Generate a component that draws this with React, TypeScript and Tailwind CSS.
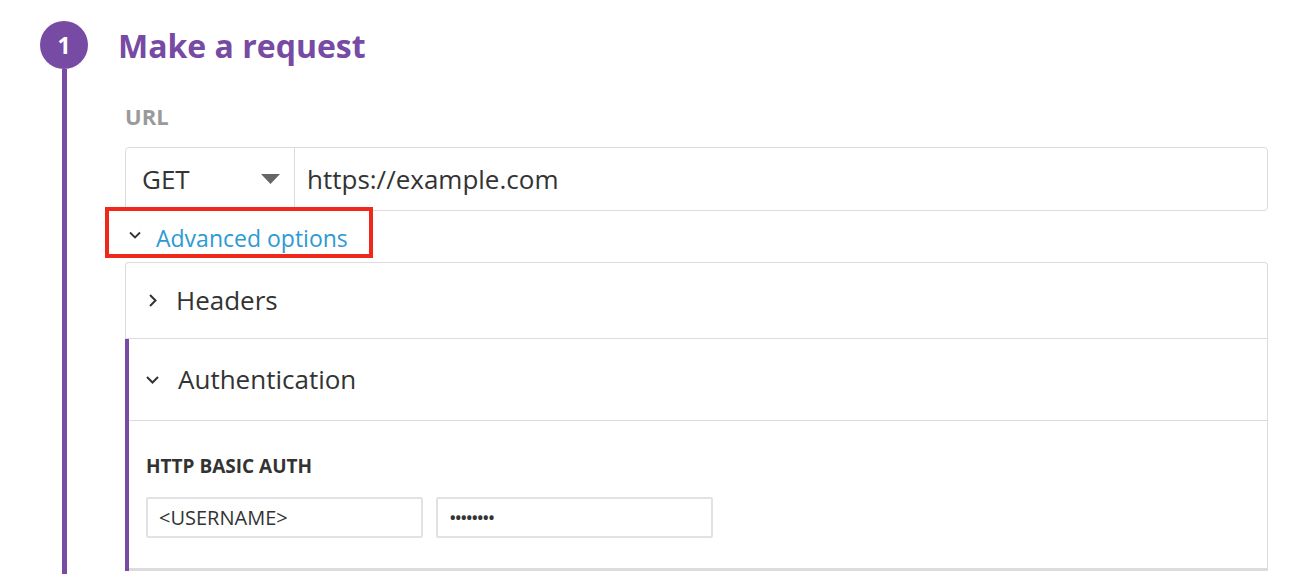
export default function App() {
  return (
    <div className="relative flex h-[574px] w-[1294px] overflow-hidden bg-white font-['Open_Sans',sans-serif]">
      {/* Step rail */}
      <div className="flex w-[88px] shrink-0 flex-col items-center pl-[40px]">
        <div className="mt-[21px] flex h-[48px] w-[48px] items-center justify-center rounded-full bg-[#774aa4] text-[23px] font-bold text-white">
          1
        </div>
        <div className="w-[5px] flex-1 bg-[#774aa4]" />
      </div>

      {/* Step body */}
      <div className="ml-[30px] flex-1 pr-[26px]">
        <div className="mt-[22px] flex h-[48px] items-center">
          <h1 className="text-[32px] leading-none font-bold text-[#774aa4]">
            Make a request
          </h1>
        </div>

        <div className="pl-[7px]">
          <div className="mt-[35px] text-[22px] leading-none font-bold text-[#9a9a9a]">
            URL
          </div>

          {/* Method + URL */}
          <div className="mt-[20px] flex h-[64px] rounded-[4px] border border-[#dcdce0]">
            <div className="flex w-[169px] items-center justify-between border-r border-[#dcdce0] pr-[14px] pl-[16px]">
              <span className="text-[26px] text-[#333]">GET</span>
              <svg width="19" height="10" viewBox="0 0 19 10">
                <path d="M0 0h19L9.5 10z" fill="#666" />
              </svg>
            </div>
            <div className="flex items-center pl-[12px] text-[26px] text-[#333]">
              https://example.com
            </div>
          </div>

          {/* Advanced options */}
          <div className="relative flex h-[51px] items-center pt-[4px]">
            <svg width="12" height="8" viewBox="0 0 12 8" className="mt-[-8px] ml-[4px]">
              <path d="M1 1.5l5 5 5-5" fill="none" stroke="#333" strokeWidth="1.8" />
            </svg>
            <span className="ml-[15px] text-[23px] text-[#2d9ad3]">Advanced options</span>
            <div className="absolute top-[-4px] left-[-20px] h-[51px] w-[268px] border-4 border-[#f0281c]" />
          </div>

          {/* Accordion */}
          <div className="rounded-t-[4px] border-x border-t border-[#dcdce0]">
            <div className="flex h-[76px] items-center border-b border-[#dcdce0]">
              <svg width="10" height="15" viewBox="0 0 10 15" className="ml-[22px]">
                <path d="M2 2l5.5 5.5L2 13" fill="none" stroke="#333" strokeWidth="2" />
              </svg>
              <span className="ml-[18px] text-[26px] text-[#333]">Headers</span>
            </div>

            <div className="-ml-px border-l-4 border-[#774aa4]">
              <div className="flex h-[82px] items-center border-b border-[#dcdce0]">
                <svg width="15" height="10" viewBox="0 0 15 10" className="ml-[16px]">
                  <path d="M2 2l5.5 5.5L13 2" fill="none" stroke="#333" strokeWidth="2" />
                </svg>
                <span className="ml-[18px] text-[26px] text-[#333]">Authentication</span>
              </div>

              <div className="h-[150px] border-b-[3px] border-[#dcdce0] pt-[36px] pl-[17px]">
                <div className="text-[19px] leading-none font-bold text-[#333]">HTTP BASIC AUTH</div>
                <div className="mt-[21px] flex gap-[13px]">
                  <div className="flex h-[41px] w-[277px] items-center rounded-[2px] border-2 border-[#e2e2e6] pl-[11px] text-[20px] text-[#333]">
                    &lt;USERNAME&gt;
                  </div>
                  <div className="flex h-[41px] w-[277px] items-center rounded-[2px] border-2 border-[#e2e2e6] pl-[11px] text-[20px] tracking-[-2px] text-[#333]">
                    ••••••••
                  </div>
                </div>
              </div>
            </div>
          </div>
        </div>
      </div>
    </div>
  );
}
